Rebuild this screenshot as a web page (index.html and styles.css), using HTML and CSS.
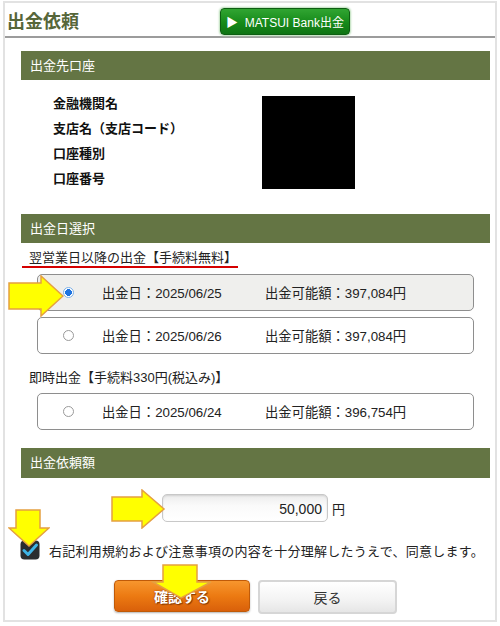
FILE: index.html
```html
<!DOCTYPE html>
<html lang="ja">
<head>
    <meta charset="UTF-8">
    <meta name="viewport" content="width=device-width, initial-scale=1.0">
    <title>出金依頼</title>
    <link rel="stylesheet" href="styles.css">
</head>
<body>
    <div class="page">
        <header class="head">
            <h1>出金依頼</h1>
            <a class="bank-btn" href="#">&#9654;&nbsp; MATSUI Bank出金</a>
        </header>

        <div class="content">
            <div class="bar">出金先口座</div>
            <div class="account">
                <div class="labels">
                    <p>金融機関名</p>
                    <p>支店名（支店コード）</p>
                    <p>口座種別</p>
                    <p>口座番号</p>
                </div>
                <div class="masked"></div>
            </div>

            <div class="bar bar-date">出金日選択</div>
            <div class="group-label first"><span class="underline">翌営業日以降の出金【手続料無料】</span></div>
            <label class="option selected">
                <span class="radio on"></span>
                <span class="date">出金日：2025/06/25</span>
                <span class="amount">出金可能額：397,084円</span>
            </label>
            <label class="option">
                <span class="radio"></span>
                <span class="date">出金日：2025/06/26</span>
                <span class="amount">出金可能額：397,084円</span>
            </label>
            <div class="group-label second">即時出金【手続料330円(税込み)】</div>
            <label class="option">
                <span class="radio"></span>
                <span class="date">出金日：2025/06/24</span>
                <span class="amount">出金可能額：396,754円</span>
            </label>

            <div class="bar bar-amount">出金依頼額</div>
            <div class="amount-row">
                <div class="amount-input">50,000</div>
                <span class="yen">円</span>
            </div>

            <div class="agree">
                <svg class="check" width="20" height="20" viewBox="0 0 20 20">
                    <rect x="0.5" y="0.5" width="19" height="19" rx="4" fill="#2a2d30"/>
                    <path d="M4 10.5 L8 14.5 L16.5 5" fill="none" stroke="#3fb4e6" stroke-width="3" stroke-linecap="round" stroke-linejoin="round"/>
                </svg>
                <span>右記利用規約および注意事項の内容を十分理解したうえで、同意します。</span>
            </div>

            <div class="buttons">
                <a class="btn btn-confirm" href="#">確認する</a>
                <a class="btn btn-back" href="#">戻る</a>
            </div>
        </div>

        <!-- annotation arrows -->
        <svg class="arrow arrow-radio" width="56" height="42" viewBox="0 0 56 42">
            <polygon points="1,8 33,8 33,1 55,21 33,41 33,34 1,34" fill="#ffff00" stroke="#e5a040" stroke-width="1.5"/>
        </svg>
        <svg class="arrow arrow-input" width="55" height="40" viewBox="0 0 55 40">
            <polygon points="1,8 31,8 31,1 53,20 31,39 31,32 1,32" fill="#ffff00" stroke="#e5a040" stroke-width="1.5"/>
        </svg>
        <svg class="arrow arrow-check" width="42" height="38" viewBox="0 0 42 38">
            <polygon points="8,1 32,1 32,19 41,19 21,37 1,19 8,19" fill="#ffff00" stroke="#e5a040" stroke-width="1.5"/>
        </svg>
        <svg class="arrow arrow-btn" width="62" height="36" viewBox="0 0 62 36">
            <polygon points="12,1 46,1 46,18 60,18 30,34 2,18 12,18" fill="#ffff00" stroke="#e5a040" stroke-width="1.5"/>
        </svg>
    </div>
</body>
</html>
```

FILE: styles.css
```css
body {
    margin: 0;
    padding: 0;
    background-color: #fff;
    font-family: "Liberation Sans", "Noto Sans CJK JP", sans-serif;
    color: #222;
}
.page {
    position: relative;
    margin: 1px 3px 0 3px;
    border: 2px solid #e2e2e2;
    height: 621px;
    box-sizing: border-box;
}
.head {
    height: 33px;
    display: flex;
    align-items: center;
    border-bottom: 2px solid #9c9c9c;
    padding-left: 2px;
}
.head h1 {
    margin: 0;
    font-size: 18px;
    font-weight: bold;
    color: #56663a;
    width: 213px;
}
.bank-btn {
    display: flex;
    align-items: center;
    justify-content: center;
    width: 128px;
    height: 25px;
    margin-top: 3px;
    border: 1px solid #0e5e12;
    border-radius: 4px;
    background: linear-gradient(#31a532, #168a1a 55%, #0f7414);
    box-shadow: 0 0 2px 1px #b7dcb5;
    color: #fff;
    font-size: 12px;
    text-decoration: none;
}
.content {
    padding: 13px 5px 0 16px;
}
.bar {
    height: 29px;
    line-height: 29px;
    background-color: #647544;
    color: #fff;
    font-size: 13px;
    padding-left: 9px;
}
.account {
    display: grid;
    grid-template-columns: 241px 93px;
    margin-top: 11px;
}
.labels p {
    margin: 0;
    height: 25px;
    line-height: 25px;
    padding-left: 32px;
    font-size: 13px;
    font-weight: bold;
    color: #111;
}
.masked {
    width: 93px;
    height: 93px;
    margin-top: 5px;
    background-color: #000;
}
.bar-date {
    margin-top: 23px;
}
.group-label {
    font-size: 13px;
    line-height: 16px;
    color: #222;
}
.group-label.first {
    padding-top: 7px;
}
.group-label.second {
    padding-top: 16px;
    padding-left: 8px;
}
.underline {
    display: inline-block;
    padding: 0 1px 0 7px;
    margin-left: 1px;
    border-bottom: 2px solid #d40000;
}
.option {
    display: flex;
    align-items: center;
    height: 35px;
    margin: 6px 16px 0 16px;
    border: 1px solid #8e8e8e;
    border-radius: 5px;
    background-color: #fff;
    font-size: 13.3px;
    color: #222;
}
.group-label.second + .option {
    margin-top: 7px;
}
.option.selected {
    background-color: #efefed;
}
.radio {
    width: 11px;
    height: 11px;
    margin-left: 25px;
    border: 1px solid #9a9a9a;
    border-radius: 50%;
    background-color: #fff;
    box-sizing: border-box;
}
.radio.on {
    border: 1px solid #7fb2e8;
    background: radial-gradient(circle, #1f74e0 0 3.4px, #fff 3.6px);
}
.date {
    margin-left: 28px;
    width: 163px;
}
.bar-amount {
    margin-top: 18px;
    height: 30px;
    line-height: 30px;
}
.amount-row {
    display: flex;
    justify-content: center;
    align-items: center;
    gap: 4px;
    margin-top: 16px;
    margin-left: -4px;
}
.amount-input {
    width: 166px;
    height: 28px;
    line-height: 28px;
    box-sizing: border-box;
    border: 1px solid #c8c8c8;
    border-radius: 5px;
    background: linear-gradient(#ececec, #fafafa 40%, #fff);
    box-shadow: inset 0 1px 2px rgba(0, 0, 0, 0.12);
    text-align: right;
    padding-right: 5px;
    font-size: 14px;
    color: #222;
}
.yen {
    font-size: 13px;
}
.agree {
    display: flex;
    align-items: center;
    gap: 9px;
    margin-top: 18px;
    margin-left: -1px;
    font-size: 13px;
    letter-spacing: 0.25px;
    color: #222;
    white-space: nowrap;
}
.check {
    display: block;
    flex: none;
}
.buttons {
    display: flex;
    justify-content: center;
    align-items: flex-start;
    gap: 8px;
    margin-top: 20px;
}
.btn {
    display: flex;
    align-items: center;
    justify-content: center;
    box-sizing: border-box;
    border-radius: 4px;
    font-size: 14px;
    text-decoration: none;
}
.btn-confirm {
    width: 136px;
    height: 32px;
    border: 1px solid #c05a08;
    background: linear-gradient(#f7962e, #ec7a12 50%, #d9600a);
    color: #fff;
    font-weight: bold;
    text-shadow: 0 0 2px #8a3a00, 1px 1px 1px #8a3a00;
    box-shadow: 0 1px 2px rgba(0, 0, 0, 0.3);
}
.btn-back {
    width: 139px;
    height: 34px;
    border: 2px solid #d6d6d6;
    background: linear-gradient(#fff, #f3f3f3 60%, #e6e6e6);
    color: #333;
}
.arrow {
    position: absolute;
    display: block;
}
.arrow-radio {
    left: 3px;
    top: 272px;
}
.arrow-input {
    left: 106px;
    top: 486px;
}
.arrow-check {
    left: 3px;
    top: 506px;
}
.arrow-btn {
    left: 146px;
    top: 561px;
}
```
